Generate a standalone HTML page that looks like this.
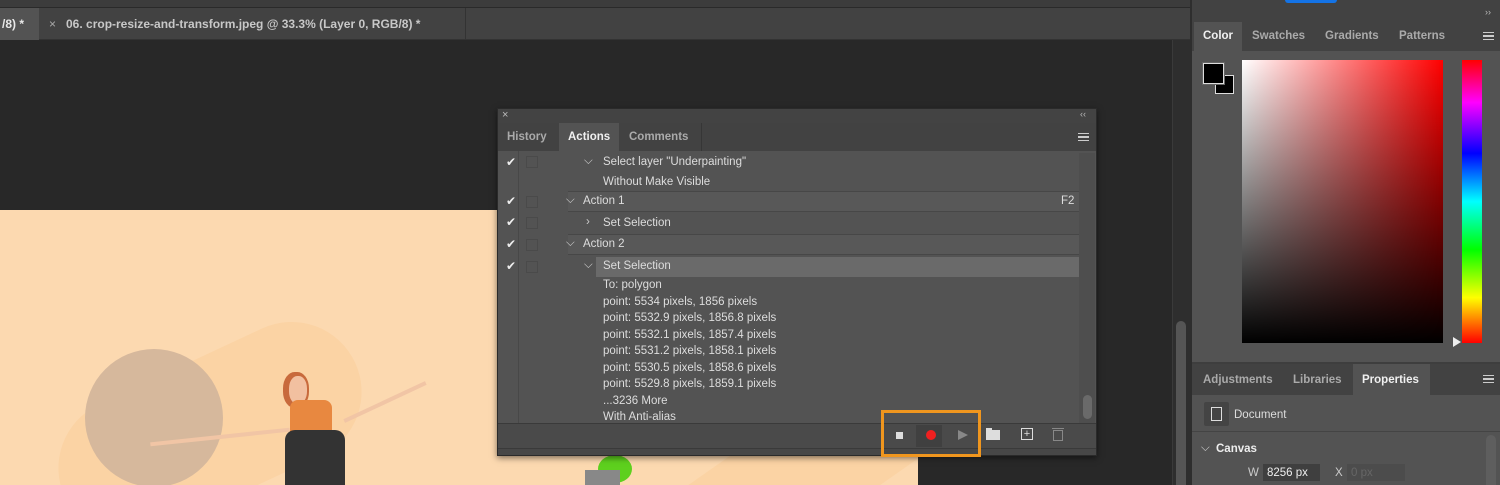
<!DOCTYPE html>
<html style="overflow:hidden;width:1500px;height:485px"><head><style>
*{margin:0;padding:0;box-sizing:border-box}
html,body{width:1500px;height:485px;overflow:hidden}
body{background:#282828;font-family:"Liberation Sans",sans-serif;color:#ddd}
#root{position:relative;width:1500px;height:485px;overflow:hidden;contain:paint}
.a{position:absolute}
.t{font-size:11.5px;white-space:nowrap}
.chk{position:absolute;left:8px;font-size:12px;color:#eee}
.box{position:absolute;left:28px;top:4px;width:12px;height:12px;border:1px solid #4a4a4a}
</style></head><body><div id="root">
<div class="a" style="left:0;top:0;width:1190px;height:8px;background:#3c3c3c;border-bottom:1px solid #2a2a2a"></div>
<div class="a" style="left:0;top:8px;width:1190px;height:32px;background:#424242;border-bottom:1px solid #333"></div>
<div class="a" style="left:0;top:8px;width:39px;height:32px;background:#535353"></div>
<div class="a t" style="left:2px;top:17px;color:#e8e8e8;font-weight:bold;font-size:12px">/8) *</div>
<div class="a t" style="left:49px;top:17px;color:#aaa;font-size:12px">×</div>
<div class="a t" style="left:66px;top:17px;color:#c8c8c8;font-weight:bold;font-size:12px">06. crop-resize-and-transform.jpeg @ 33.3% (Layer 0, RGB/8) *</div>
<div class="a" style="left:465px;top:8px;width:1px;height:32px;background:#333"></div>
<div class="a" style="left:0;top:210px;width:918px;height:275px;background:#fcd9b0;overflow:hidden;contain:paint">
 <div class="a" style="left:50px;top:150px;width:320px;height:140px;border-radius:70px;background:#fbd3a4;transform:rotate(-25deg)"></div>
 <div class="a" style="left:620px;top:160px;width:500px;height:110px;border-radius:55px;background:#fbd3a4;transform:rotate(-35deg)"></div>
 <div class="a" style="left:85px;top:139px;width:138px;height:138px;border-radius:50%;background:#d6b89c"></div>
 <div class="a" style="left:283px;top:162px;width:26px;height:36px;border-radius:45%;background:#c86a3c"></div>
 <div class="a" style="left:289px;top:166px;width:18px;height:28px;border-radius:45%;background:#f2c0a0"></div>
 <div class="a" style="left:290px;top:190px;width:42px;height:60px;background:#e88840;border-radius:8px"></div>
 <div class="a" style="left:285px;top:220px;width:60px;height:55px;background:#333;border-radius:10px 10px 0 0"></div>
 <div class="a" style="left:150px;top:225px;width:140px;height:4px;background:#f1c5a5;transform:rotate(-6deg)"></div>
 <div class="a" style="left:340px;top:190px;width:90px;height:4px;background:#f1c5a5;transform:rotate(-25deg)"></div>
 <div class="a" style="left:598px;top:245px;width:34px;height:28px;border-radius:50%;background:#5ed01e"></div>
 <div class="a" style="left:585px;top:260px;width:35px;height:15px;background:#888"></div>
</div>
<div class="a" style="left:1172px;top:40px;width:18px;height:445px;background:#2e2e2e;border-left:1px solid #3a3a3a"></div>
<div class="a" style="left:1176px;top:321px;width:10px;height:164px;border-radius:5px 5px 0 0;background:#555"></div>
<div class="a" style="left:497px;top:108px;width:600px;height:348px;background:#535353;border:1px solid #2a2a2a;box-shadow:0 2px 6px rgba(0,0,0,.5)">
 <div class="a" style="left:0;top:0;width:598px;height:14px;background:#434343"></div>
 <div class="a t" style="left:4px;top:0;color:#bbb;font-size:11px">×</div>
 <div class="a t" style="left:582px;top:0;color:#bbb;font-size:9px">‹‹</div>
 <div class="a" style="left:0;top:14px;width:598px;height:28px;background:#424242"></div>
 <div class="a" style="left:61px;top:14px;width:60px;height:28px;background:#535353"></div>
 <div class="a t" style="left:9px;top:22px;color:#aaa;font-weight:bold">History</div>
 <div class="a t" style="left:70px;top:22px;color:#f0f0f0;font-weight:bold">Actions</div>
 <div class="a t" style="left:131px;top:22px;color:#aaa;font-weight:bold">Comments</div>
 <div class="a" style="left:203px;top:14px;width:1px;height:28px;background:#363636"></div>
 <div class="a" style="left:580px;top:24px;width:11px;height:8px;border-top:1px solid #ccc;border-bottom:1px solid #ccc"></div>
 <div class="a" style="left:580px;top:27px;width:11px;height:2px;border-top:1px solid #ccc;border-bottom:1px solid #ccc"></div>
 <div class="a" style="left:0;top:42px;width:598px;height:272px;overflow:hidden">
  <div class="a" style="left:20px;top:0;width:1px;height:272px;background:#484848"></div>
  <div class="a" style="left:581px;top:2px;width:16px;height:270px;background:#4e4e4e"></div>
  <div class="a" style="left:585px;top:244px;width:9px;height:24px;border-radius:5px;background:#6a6a6a"></div>
  <div class="chk" style="top:4px">✔</div><div class="box" style="top:5px"></div>
  <div class="a t" style="left:86px;top:4px;color:#ccc">⌵</div>
  <div class="a t" style="left:105px;top:5px">Select layer "Underpainting"</div>
  <div class="a t" style="left:105px;top:25px">Without Make Visible</div>
  <div class="a" style="left:70px;top:40px;width:511px;height:21px;background:#585858;border-top:1px solid #474747;border-bottom:1px solid #474747"></div>
  <div class="chk" style="top:43px">✔</div><div class="box" style="top:45px"></div>
  <div class="a t" style="left:68px;top:43px;color:#ccc">⌵</div>
  <div class="a t" style="left:85px;top:44px">Action 1</div>
  <div class="a t" style="left:563px;top:44px">F2</div>
  <div class="chk" style="top:64px">✔</div><div class="box" style="top:66px"></div>
  <div class="a" style="left:70px;top:83px;width:511px;height:21px;background:#585858;border-top:1px solid #474747;border-bottom:1px solid #474747"></div>
  <div class="a t" style="left:88px;top:65px;color:#ccc">›</div>
  <div class="a t" style="left:105px;top:66px">Set Selection</div>
  <div class="chk" style="top:86px">✔</div><div class="box" style="top:88px"></div>
  <div class="a t" style="left:68px;top:86px;color:#ccc">⌵</div>
  <div class="a t" style="left:85px;top:87px">Action 2</div>
  <div class="a" style="left:98px;top:106px;width:483px;height:20px;background:#6a6a6a"></div>
  <div class="chk" style="top:108px">✔</div><div class="box" style="top:110px"></div>
  <div class="a t" style="left:86px;top:108px;color:#ccc">⌵</div>
  <div class="a t" style="left:105px;top:109px">Set Selection</div>
  <div class="a t" style="left:105px;top:128px">To: polygon</div>
  <div class="a t" style="left:105px;top:145px">point: 5534 pixels, 1856 pixels</div>
  <div class="a t" style="left:105px;top:161px">point: 5532.9 pixels, 1856.8 pixels</div>
  <div class="a t" style="left:105px;top:178px">point: 5532.1 pixels, 1857.4 pixels</div>
  <div class="a t" style="left:105px;top:194px">point: 5531.2 pixels, 1858.1 pixels</div>
  <div class="a t" style="left:105px;top:211px">point: 5530.5 pixels, 1858.6 pixels</div>
  <div class="a t" style="left:105px;top:227px">point: 5529.8 pixels, 1859.1 pixels</div>
  <div class="a t" style="left:105px;top:244px">...3236 More</div>
  <div class="a t" style="left:105px;top:260px">With Anti-alias</div>
 </div>
 <div class="a" style="left:0;top:314px;width:598px;height:25px;background:#4a4a4a;border-top:1px solid #3a3a3a"></div>
 <div class="a" style="left:0;top:339px;width:598px;height:7px;background:#474747;border-top:1px solid #3a3a3a"></div>
 <div class="a" style="left:418px;top:316px;width:26px;height:22px;background:#404040"></div>
 <div class="a" style="left:398px;top:323px;width:7px;height:7px;background:#ddd"></div>
 <div class="a" style="left:428px;top:321px;width:10px;height:10px;border-radius:50%;background:#f02020"></div>
 <div class="a" style="left:460px;top:321px;width:0;height:0;border-left:10px solid #888;border-top:5px solid transparent;border-bottom:5px solid transparent"></div>
 <div class="a" style="left:488px;top:319px;width:6px;height:2px;background:#ddd"></div>
 <div class="a" style="left:488px;top:321px;width:14px;height:10px;background:#ddd"></div>
 <div class="a" style="left:523px;top:319px;width:12px;height:12px;border:1px solid #ddd;color:#ddd;font-size:11px;line-height:10px;text-align:center">+</div>
 <div class="a" style="left:554px;top:319px;width:12px;height:1px;background:#888"></div>
 <div class="a" style="left:555px;top:321px;width:10px;height:11px;border:1px solid #888"></div>
</div>
<div class="a" style="left:881px;top:410px;width:100px;height:47px;border:3px solid #f0961e"></div>
<div class="a" style="left:1190px;top:0;width:310px;height:485px;background:#535353;border-left:2px solid #2e2e2e"></div>
<div class="a" style="left:1192px;top:0;width:308px;height:8px;background:#424242"></div>
<div class="a" style="left:1285px;top:0;width:52px;height:3px;background:#1473e6;border-radius:0 0 6px 6px"></div>
<div class="a" style="left:1192px;top:8px;width:308px;height:14px;background:#424242"></div>
<div class="a t" style="left:1485px;top:7px;color:#bbb;font-size:9px">››</div>
<div class="a" style="left:1192px;top:22px;width:308px;height:29px;background:#424242"></div>
<div class="a" style="left:1194px;top:22px;width:48px;height:29px;background:#535353"></div>
<div class="a t" style="left:1203px;top:30px;color:#f0f0f0;font-weight:bold">Color</div>
<div class="a t" style="left:1252px;top:30px;color:#aaa;font-weight:bold">Swatches</div>
<div class="a t" style="left:1325px;top:30px;color:#aaa;font-weight:bold">Gradients</div>
<div class="a t" style="left:1399px;top:30px;color:#aaa;font-weight:bold">Patterns</div>
<div class="a" style="left:1483px;top:32px;width:11px;height:8px;border-top:1px solid #ccc;border-bottom:1px solid #ccc"></div>
<div class="a" style="left:1483px;top:35px;width:11px;height:2px;border-top:1px solid #ccc;border-bottom:1px solid #ccc"></div>
<div class="a" style="left:1215px;top:75px;width:19px;height:19px;background:#000;border:1px solid #ddd"></div>
<div class="a" style="left:1203px;top:63px;width:21px;height:21px;background:#000;border:1px solid #ddd;outline:1px solid #666"></div>
<div class="a" style="left:1242px;top:60px;width:201px;height:283px;background:linear-gradient(to bottom,rgba(0,0,0,0),#000),linear-gradient(to right,#fff,#f00)"></div>
<div class="a" style="left:1462px;top:60px;width:20px;height:283px;background:linear-gradient(to bottom,#f00,#f0f 15%,#00f 33%,#0ff 50%,#0f0 67%,#ff0 84%,#f00)"></div>
<div class="a" style="left:1453px;top:337px;width:0;height:0;border-left:8px solid #eee;border-top:5px solid transparent;border-bottom:5px solid transparent"></div>
<div class="a" style="left:1192px;top:362px;width:308px;height:2px;background:#3e3e3e"></div>
<div class="a" style="left:1192px;top:364px;width:308px;height:31px;background:#424242"></div>
<div class="a" style="left:1353px;top:364px;width:77px;height:31px;background:#535353"></div>
<div class="a t" style="left:1203px;top:374px;color:#aaa;font-weight:bold">Adjustments</div>
<div class="a t" style="left:1293px;top:374px;color:#aaa;font-weight:bold">Libraries</div>
<div class="a t" style="left:1362px;top:374px;color:#f0f0f0;font-weight:bold">Properties</div>
<div class="a" style="left:1483px;top:375px;width:11px;height:8px;border-top:1px solid #ccc;border-bottom:1px solid #ccc"></div>
<div class="a" style="left:1483px;top:378px;width:11px;height:2px;border-top:1px solid #ccc;border-bottom:1px solid #ccc"></div>
<div class="a" style="left:1204px;top:402px;width:25px;height:24px;background:#444;border-radius:2px"></div>
<div class="a" style="left:1211px;top:407px;width:11px;height:14px;border:1px solid #ddd"></div>
<div class="a t" style="left:1234px;top:409px;color:#ddd">Document</div>
<div class="a" style="left:1192px;top:431px;width:308px;height:1px;background:#444"></div>
<div class="a t" style="left:1201px;top:442px;color:#ccc">⌵</div>
<div class="a t" style="left:1216px;top:443px;color:#eee;font-weight:bold">Canvas</div>
<div class="a t" style="left:1248px;top:467px;color:#ccc">W</div>
<div class="a" style="left:1263px;top:464px;width:57px;height:17px;background:#3f3f3f"></div>
<div class="a t" style="left:1267px;top:467px;color:#eee">8256 px</div>
<div class="a t" style="left:1335px;top:467px;color:#ccc">X</div>
<div class="a" style="left:1347px;top:464px;width:58px;height:17px;background:#4c4c4c"></div>
<div class="a t" style="left:1351px;top:467px;color:#666">0 px</div>
<div class="a" style="left:1486px;top:435px;width:10px;height:50px;border-radius:5px 5px 0 0;background:#5e5e5e"></div>
</div></body></html>
